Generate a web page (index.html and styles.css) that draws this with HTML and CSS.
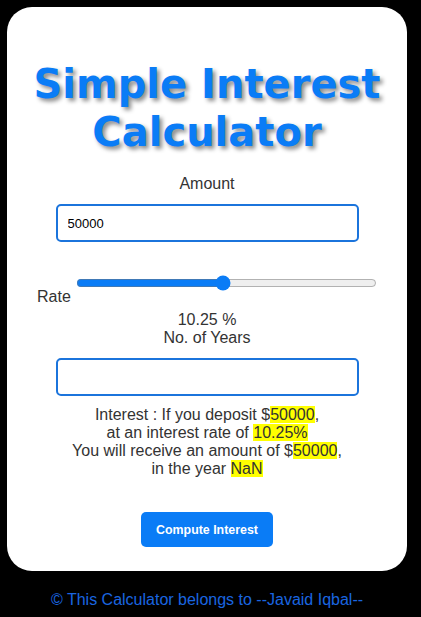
FILE: index.html
```html
<!DOCTYPE html>
<html>
<head>
<meta charset="utf-8">
<link rel="stylesheet" href="styles.css">
</head>
<body>
<div class="card">
  <h1 class="title">Simple Interest Calculator</h1>
  <div class="label">Amount</div>
  <input class="field" type="number" value="50000">
  <div class="rate-row">
    <span class="rate-label">Rate</span>
    <input class="slider" type="range" min="1" max="20" step="0.25" value="10.25">
  </div>
  <div class="rate-value">10.25 %</div>
  <div class="label">No. of Years</div>
  <input class="field" type="number">
  <div class="result">
    Interest : If you deposit $<mark>50000</mark>,<br>
    at an interest rate of <mark>10.25%</mark><br>
    You will receive an amount of $<mark>50000</mark>,<br>
    in the year <mark>NaN</mark>
  </div>
  <button class="btn">Compute Interest</button>
</div>
<footer class="footer">© This Calculator belongs to --Javaid Iqbal--</footer>
</body>
</html>
```
FILE: styles.css
```css
html, body {
  margin: 0;
  background: #000;
}
body {
  padding: 7px 14px 0 7px;
  font-family: "Liberation Sans", Arial, sans-serif;
  font-size: 16px;
  color: #333;
}
.card {
  width: 400px;
  box-sizing: border-box;
  background: #fff;
  border-radius: 25px;
  padding: 53px 30px 24px 30px;
  text-align: center;
}
.title {
  margin: 0 -25px 19px -25px;
  font-family: "DejaVu Sans", Verdana, sans-serif;
  font-weight: bold;
  font-size: 40px;
  line-height: 48px;
  color: #0a7cf6;
  text-shadow: 3px 3px 4px rgba(0, 0, 0, 0.45);
}
.label {
  line-height: 18px;
}
.field {
  display: block;
  box-sizing: border-box;
  width: 303px;
  height: 38px;
  margin: 11px auto 0 auto;
  padding: 0 10px;
  border: 2px solid #1b74dc;
  border-radius: 5px;
  font-family: "Liberation Sans", Arial, sans-serif;
  font-size: 13px;
  color: #000;
  outline: none;
  -moz-appearance: textfield;
}
.field::-webkit-outer-spin-button,
.field::-webkit-inner-spin-button {
  -webkit-appearance: none;
  margin: 0;
}
.rate-row {
  display: flex;
  align-items: flex-start;
  gap: 5px;
  margin-top: 33px;
  text-align: left;
}
.rate-label {
  margin-top: 13px;
  line-height: 18px;
}
.slider {
  width: 302px;
  height: 16px;
  margin: 0;
  accent-color: #0a7cf6;
}
.rate-value {
  margin-top: 5px;
  line-height: 18px;
}
.result {
  margin-top: 10px;
  line-height: 18px;
}
mark {
  background: #ffff00;
  color: #333;
}
.btn {
  margin-top: 34px;
  width: 132px;
  height: 35px;
  border: none;
  border-radius: 5px;
  background: #0a7cf6;
  color: #fff;
  font-family: "Liberation Sans", Arial, sans-serif;
  font-weight: bold;
  font-size: 12.4px;
  vertical-align: top;
}
.footer {
  width: 400px;
  margin-top: 20px;
  text-align: center;
  line-height: 18px;
  color: #1a66e0;
}
```
